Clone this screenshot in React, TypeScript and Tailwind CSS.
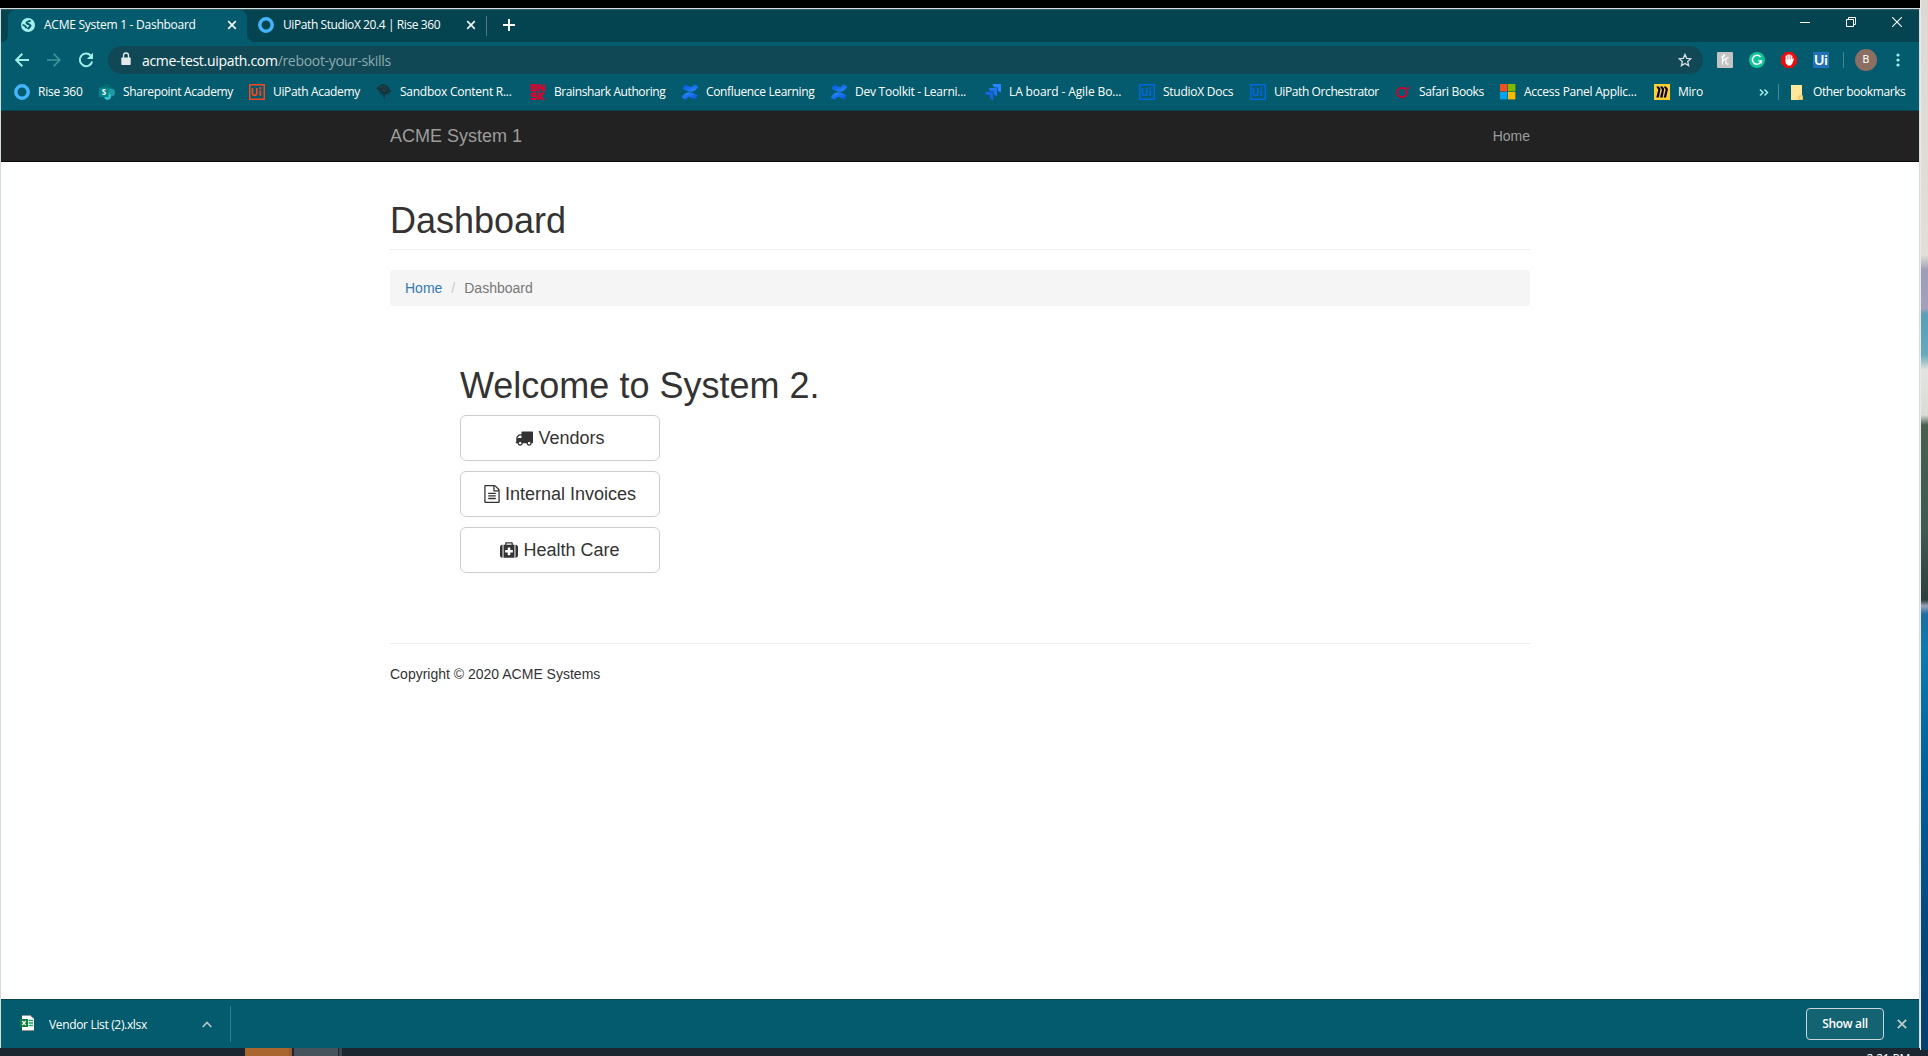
import React from "react";

type IconProps = { className?: string };

const Ring = () => (
  <svg width="16" height="16" viewBox="0 0 16 16" className="shrink-0">
    <circle cx="8" cy="8" r="6.2" fill="none" stroke="#45b5f9" strokeWidth="3.5" />
  </svg>
);

const Globe = () => (
  <svg width="16" height="16" viewBox="0 0 16 16" className="shrink-0">
    <circle cx="8" cy="8" r="7" fill="#a4f0ea" />
    <path d="M10.6 3.4C9.200 4.600 7 4.200 6.500 5.700c-.4 1.500 3.500 1.100 4 2.800.3 1.600-2 1.800-2.700 3.700" fill="none" stroke="#075a6c" strokeWidth="2" />
    <path d="M2.500 7.700l2.300 1 .9 1.700h1.500" fill="none" stroke="#075a6c" strokeWidth="1.600" />
  </svg>
);

const Sharepoint = () => (
  <svg width="16" height="16" viewBox="0 0 16 16" className="shrink-0">
    <circle cx="8" cy="5" r="5" fill="#036c70" />
    <circle cx="12" cy="8.6" r="4" fill="#1a9ba1" />
    <circle cx="8.6" cy="12.6" r="3.3" fill="#37c6d0" />
    <rect x="0" y="3.5" width="9.500" height="9.500" rx="1" fill="#03838a" />
    <text x="4.800" y="11.200" fontSize="8" fontWeight="700" fill="#fff" textAnchor="middle" fontFamily="Open Sans, sans-serif">S</text>
  </svg>
);

const UiBox = ({ color }: { color: string }) => (
  <svg width="16" height="16" viewBox="0 0 16 16" className="shrink-0">
    <rect x="0.75" y="0.75" width="14.5" height="14.5" fill="none" stroke={color} strokeWidth="1.5" />
    <path d="M3.4 4v5.2a2.2 2.2 0 0 0 4.4 0V4M11.3 6.2V12" fill="none" stroke={color} strokeWidth="1.7" />
    <circle cx="11.3" cy="4.2" r="1.1" fill={color} />
  </svg>
);

const Bird = () => (
  <svg width="16" height="16" viewBox="0 0 16 16" className="shrink-0">
    <path d="M0 4.5 4 1.2 8 0l4 2.4L15.6 8l-2.3-.6.5 3-2.2-1.5-.4 2.4L9.4 9.8 8.2 15.5 6.4 9.6 4.6 10.8 4.2 7.6 2.4 8.3 2.6 5.8Z" fill="#15343d" />
    <path d="M3.5 3.5 8 2.5l3.5 3M6 6l4 1" fill="none" stroke="#285561" strokeWidth=".7" />
  </svg>
);

const Brainshark = () => (
  <svg width="16" height="16" viewBox="0 0 16 16" className="shrink-0" fill="none" stroke="#e4002b" strokeWidth="2">
    <path d="M1.8 0v7.4M1.8 1h3.6q1 0 1 1.2t-1 1.3H2M5.4 3.7q1.3 0 1.3 1.4T5.4 6.5H2" />
    <path d="M9.3 7.4V0M9.5.8l4 5.6M14 7.4V0" />
    <path d="M6.8 9.4H3.2q-1.6 0-1.6 1.3T3 12h2.3q1.4 0 1.4 1.4T5.2 15H1" />
    <path d="M9.3 8.2V16M14.2 8.2l-4.4 4 4.6 3.8" />
  </svg>
);

const Confluence = () => (
  <svg width="16" height="16" viewBox="0 0 24 24" className="shrink-0">
    <defs>
      <linearGradient id="confluence-lower" x1="1" y1="1" x2="0.2" y2="0">
        <stop offset="0" stopColor="#0052cc" />
        <stop offset="0.9" stopColor="#2684ff" />
      </linearGradient>
      <linearGradient id="confluence-upper" x1="0" y1="0" x2="0.8" y2="1">
        <stop offset="0" stopColor="#0052cc" />
        <stop offset="0.9" stopColor="#2684ff" />
      </linearGradient>
    </defs>
    <path d="M.87 18.257c-.248.382-.53.875-.763 1.245a.764.764 0 0 0 .255 1.040l4.965 3.054a.764.764 0 0 0 1.058-.26c.199-.332.454-.763.733-1.221 1.967-3.247 3.945-2.853 7.508-1.146l4.957 2.337a.764.764 0 0 0 1.028-.382l2.364-5.346a.764.764 0 0 0-.382-1 599.851 599.851 0 0 1-4.965-2.361C10.911 10.970 5.224 11.185.87 18.257z" fill="url(#confluence-lower)" />
    <path d="M23.131 5.743c.249-.405.531-.875.764-1.250a.764.764 0 0 0-.256-1.034L18.675.404a.764.764 0 0 0-1.058.260c-.195.335-.451.763-.734 1.225-1.966 3.246-3.945 2.850-7.508 1.146L4.437.694a.764.764 0 0 0-1.027.382L1.046 6.422a.764.764 0 0 0 .382 1c1.039.490 3.105 1.467 4.965 2.361 6.698 3.246 12.392 3.029 16.738-4.040z" fill="url(#confluence-upper)" />
  </svg>
);

const Jira = () => (
  <svg width="16" height="16" viewBox="0 0 16 16" className="shrink-0">
    <path d="M7.600 0H16v8.300A3.600 3.600 0 0 1 12.700 5V3.400H11A3.500 3.500 0 0 1 7.600 0z" fill="#2684ff" />
    <path d="M3.800 3.900h8.300v8.300A3.600 3.600 0 0 1 8.800 8.800V7.300H7.200A3.500 3.500 0 0 1 3.800 3.900z" fill="#1f74ee" />
    <path d="M0 7.700h8.300V16A3.600 3.600 0 0 1 5 12.700v-1.600H3.400A3.500 3.500 0 0 1 0 7.700z" fill="#1565e0" />
  </svg>
);

const Safari = () => (
  <svg width="16" height="16" viewBox="0 0 16 16" className="shrink-0">
    <circle cx="7" cy="8.500" r="4.700" fill="none" stroke="#d3002d" strokeWidth="2" />
    <circle cx="13.300" cy="4" r="1.300" fill="#d3002d" />
  </svg>
);

const Microsoft = () => (
  <svg width="16" height="16" viewBox="0 0 16 16" className="shrink-0">
    <path d="M0 0h7.400v7.400H0z" fill="#f25022" />
    <path d="M8 0h7.400v7.400H8z" fill="#7fba00" />
    <path d="M0 8h7.400v7.400H0z" fill="#00a4ef" />
    <path d="M8 8h7.400v7.400H8z" fill="#ffb900" />
  </svg>
);

const Miro = () => (
  <svg width="16" height="16" viewBox="0 0 16 16" className="shrink-0">
    <path d="M0 0h16v16H0z" fill="#ffd02f" />
    <path d="M2.200 2.500h2.600L6.500 4.800 4.900 13.500H2.300L4.300 5.800zM5.900 2.500h2.600l1.700 2.300-1.600 8.700H6L8 5.800zM9.600 2.500h2.400l2 2.500-1.900 8.500H9.700L11.700 5.800z" fill="#050038" />
  </svg>
);

const TabClose = () => (
  <svg width="10" height="10" viewBox="0 0 10 10" className="shrink-0">
    <path d="M1.200 1.200l7.600 7.600M8.800 1.200 1.200 8.800" stroke="#eef5f6" strokeWidth="1.700" />
  </svg>
);

const Truck = ({ className }: IconProps) => (
  <svg viewBox="0 0 1792 1792" fill="currentColor" className={className}>
    <path d="M640 1408q0-52-38-90t-90-38-90 38-38 90 38 90 90 38 90-38 38-90zm-384-512h384v-256h-158q-13 0-22 9l-195 195q-9 9-9 22v30zm1280 512q0-52-38-90t-90-38-90 38-38 90 38 90 90 38 90-38 38-90zm256-1088v1024q0 15-4 26.500t-13.500 18.500-16.500 11.500-23.500 6-22.500 2-25.500 0-22.500-.5q0 106-75 181t-181 75-181-75-75-181h-384q0 106-75 181t-181 75-181-75-75-181h-64q-3 0-22.500.5t-25.500 0-22.500-2-23.500-6-16.500-11.500-13.500-18.500-4-26.500q0-26 19-45t45-19v-320q0-8-.5-35t0-38 2.500-34.500 6.500-37 14-30.500 22.500-30l198-198q19-19 50.500-32t58.500-13h160v-192q0-26 19-45t45-19h1024q26 0 45 19t19 45z" />
  </svg>
);

const FileText = ({ className }: IconProps) => (
  <svg viewBox="128 0 1536 1792" fill="currentColor" className={className}>
    <path d="M1596 380q28 28 48 76t20 88v1152q0 40-28 68t-68 28h-1344q-40 0-68-28t-28-68v-1600q0-40 28-68t68-28h896q40 0 88 20t76 48zm-444-244v376h376q-10-29-22-41l-313-313q-12-12-41-22zm384 1528v-1024h-416q-40 0-68-28t-28-68v-416h-768v1536h1280zm-1024-864q0-14 9-23t23-9h704q14 0 23 9t9 23v64q0 14-9 23t-23 9h-704q-14 0-23-9t-9-23v-64zm736 224q14 0 23 9t9 23v64q0 14-9 23t-23 9h-704q-14 0-23-9t-9-23v-64q0-14 9-23t23-9h704zm0 256q14 0 23 9t9 23v64q0 14-9 23t-23 9h-704q-14 0-23-9t-9-23v-64q0-14 9-23t23-9h704z" />
  </svg>
);

const Medkit = ({ className }: IconProps) => (
  <svg viewBox="0 0 1792 1792" fill="currentColor" className={className}>
    <path d="M1280 1120v-192q0-14-9-23t-23-9h-224v-224q0-14-9-23t-23-9h-192q-14 0-23 9t-9 23v224h-224q-14 0-23 9t-9 23v192q0 14 9 23t23 9h224v224q0 14 9 23t23 9h192q14 0 23-9t9-23v-224h224q14 0 23-9t9-23zm-640-736h512v-128h-512v128zm-384 0v1280h-32q-92 0-158-66t-66-158v-832q0-92 66-158t158-66h32zm1184 0v1280h-1088v-1280h160v-160q0-40 28-68t68-28h576q40 0 68 28t28 68v160h160zm352 224v832q0 92-66 158t-158 66h-32v-1280h32q92 0 158 66t66 158z" />
  </svg>
);

function TabStrip() {
  return (
    <div className="flex h-[32px] bg-[#034450] text-[12px] text-white">
      <div className="flex w-[7px] items-end bg-[#045b6d]">
        <div className="h-full w-full rounded-br-[7px] bg-[#034450]" />
      </div>
      <div className="flex bg-[#034450]">
        <div className="flex w-[239px] items-center rounded-t-[8px] bg-[#045b6d] pb-[2px] pl-[12px] pr-[10px]">
          <Globe />
          <span className="ml-[8px] flex-1 whitespace-nowrap tracking-[-0.26px]">ACME System 1 - Dashboard</span>
          <TabClose />
        </div>
      </div>
      <div className="bg-[#045b6d]">
        <div className="flex h-full w-[240px] items-center rounded-bl-[8px] bg-[#034450] pb-[2px] pl-[11px]">
          <Ring />
          <span className="ml-[9px] w-[183px] whitespace-nowrap tracking-[-0.41px]">UiPath StudioX 20.4 | Rise 360</span>
          <TabClose />
          <div className="ml-[10px] mt-[2px] h-[20px] w-px shrink-0 bg-[#4b7b85]" />
        </div>
      </div>
      <svg width="12" height="12" viewBox="0 0 12 12" className="ml-[16px] mt-[9px] shrink-0">
        <path d="M0 6h12M6 0v12" stroke="#fff" strokeWidth="2" />
      </svg>
      <div className="ml-auto flex pr-[17px] pt-[7px]">
        <svg width="10" height="11" viewBox="0 0 10 11" className="mr-[36px]">
          <path d="M0 5.500h10" stroke="#fff" />
        </svg>
        <svg width="10" height="10" viewBox="0 0 10 10" className="mr-[36px]" fill="none" stroke="#fff">
          <path d="M.5 2.500h7v7h-7zM2.500 2.500v-2h7v7h-2" />
        </svg>
        <svg width="10" height="10" viewBox="0 0 10 10">
          <path d="M0 0l10 10M10 0 0 10" stroke="#fff" strokeWidth="1.100" />
        </svg>
      </div>
    </div>
  );
}

function Toolbar() {
  return (
    <div className="flex h-[36px] items-center bg-[#045b6d] pl-[14px]">
      <svg width="14" height="14" viewBox="0 0 14 14" fill="none" stroke="#a1ede8" strokeWidth="2">
        <path d="M14 7H1.500M7.300.8 1.200 7l6.100 6.200" />
      </svg>
      <svg width="14" height="14" viewBox="0 0 14 14" className="ml-[18px]" fill="none" stroke="#3f97a1" strokeWidth="1.600">
        <path d="M0 7h12.500M6.700.8 12.800 7l-6.100 6.200" />
      </svg>
      <svg width="16" height="16" viewBox="0 0 16 16" className="ml-[17px]">
        <path d="M12.700 3.500A6.300 6.300 0 1 0 14.200 9.500" fill="none" stroke="#a1ede8" strokeWidth="2" />
        <path d="M15 .8v6.200H8.900z" fill="#a1ede8" />
      </svg>
      <div className="ml-[14px] flex h-[28px] w-[1595px] items-center rounded-full bg-[#104955] pl-[13px] pr-[11px]">
        <svg width="10" height="14" viewBox="0 0 10 14" className="mb-[2px]">
          <path d="M1 5.500h8q.7 0 .7.700v6q0 .7-.7.700H1q-.7 0-.7-.7v-6q0-.7.7-.7z" fill="#e4eaeb" />
          <path d="M2.500 6V3.500a2.500 2.500 0 0 1 5 0V6" fill="none" stroke="#e4eaeb" strokeWidth="1.300" />
        </svg>
        <span className="ml-[11px] flex-1 whitespace-nowrap text-[14px] tracking-[-0.31px] text-[#8fa9ae]">
          <span className="text-white">acme-test.uipath.com</span>/reboot-your-skills
        </span>
        <svg width="14" height="14" viewBox="0 0 14 14">
          <path d="M7 1.400 8.700 5.300l4.100.4-3.100 2.800.9 4.100L7 10.500l-3.600 2.100.9-4.100L1.200 5.700l4.100-.4z" fill="none" stroke="#d6dfe1" strokeWidth="1.300" />
        </svg>
      </div>
      <svg width="16" height="16" viewBox="0 0 16 16" className="ml-[14px]">
        <rect width="16" height="16" rx="1" fill="#c3c3c3" />
        <path d="M4 5.200C6 5 7.800 4.300 7.600 3 7.200 1.800 5.600 3.500 5.500 7v5.500M5.600 9.500c1.300-2.600 4-2.700 3.500-.6-.6 2.100-.3 4 2.400 2.900M7.500 6.500l4.300-.8" fill="none" stroke="#fff" strokeWidth="1.200" />
      </svg>
      <svg width="16" height="16" viewBox="0 0 16 16" className="ml-[16px]">
        <circle cx="8" cy="8" r="8" fill="#15c39a" />
        <path d="M11.500 5A4.500 4.500 0 1 0 12.300 9H9.400" fill="none" stroke="#fff" strokeWidth="1.500" />
        <path d="M12.300 8.300v3.200" stroke="#fff" strokeWidth="1.200" />
      </svg>
      <svg width="16" height="16" viewBox="0 0 16 16" className="ml-[16px]">
        <path d="M4.700 0h6.600L16 4.700v6.600L11.300 16H4.700L0 11.300V4.700z" fill="#ea0d0d" />
        <path d="M5.300 4v5M7.100 3v5M8.900 3v5M10.700 4v5" stroke="#fff" strokeWidth="1.400" strokeLinecap="round" />
        <path d="M4.600 7.500h6.800l1-1.200.6.700-1.800 4.700-1.500 1.700H6.900L4.600 11z" fill="#fff" />
      </svg>
      <div className="ml-[16px] flex h-[16px] w-[16px] items-center justify-center bg-[#2170b8] font-['Lato'] text-[14px] font-bold leading-none text-white">Ui</div>
      <div className="ml-[14px] h-[16px] w-px bg-[#3c8a96]" />
      <div className="ml-[11px] flex h-[22px] w-[22px] items-center justify-center rounded-full bg-[#8d6e63] font-['Roboto'] text-[11px] text-white">B</div>
      <svg width="4" height="14" viewBox="0 0 4 14" className="ml-[19px]" fill="#a1ede8">
        <circle cx="2" cy="2" r="1.600" />
        <circle cx="2" cy="7" r="1.600" />
        <circle cx="2" cy="12" r="1.600" />
      </svg>
    </div>
  );
}

const bookmarks = [
  { label: "Rise 360", icon: <Ring />, box: "w-[85px] tracking-[-0.25px]" },
  { label: "Sharepoint Academy", icon: <Sharepoint />, box: "w-[150px] tracking-[-0.32px]" },
  { label: "UiPath Academy", icon: <UiBox color="#f9461c" />, box: "w-[127px] tracking-[-0.34px]" },
  { label: "Sandbox Content R...", icon: <Bird />, box: "w-[154px] tracking-[-0.25px]" },
  { label: "Brainshark Authoring", icon: <Brainshark />, box: "w-[152px] tracking-[-0.4px]" },
  { label: "Confluence Learning", icon: <Confluence />, box: "w-[149px] tracking-[-0.35px]" },
  { label: "Dev Toolkit - Learni...", icon: <Confluence />, box: "w-[154px] tracking-[-0.25px]" },
  { label: "LA board - Agile Bo...", icon: <Jira />, box: "w-[154px] tracking-[-0.12px]" },
  { label: "StudioX Docs", icon: <UiBox color="#0067df" />, box: "w-[111px] tracking-[-0.25px]" },
  { label: "UiPath Orchestrator", icon: <UiBox color="#0067df" />, box: "w-[145px] tracking-[-0.4px]" },
  { label: "Safari Books", icon: <Safari />, box: "w-[105px] tracking-[-0.36px]" },
  { label: "Access Panel Applic...", icon: <Microsoft />, box: "w-[154px] tracking-[-0.25px]" },
  { label: "Miro", icon: <Miro />, box: "w-[105px] tracking-[-0.25px]" },
];

function BookmarkBar() {
  return (
    <div className="flex h-[33px] items-center border-b border-[#0b4350] bg-[#045b6d] pb-[4px] pl-[13px] text-[12px] text-white">
      {bookmarks.map((b) => (
        <div key={b.label} className={`flex shrink-0 items-center gap-[8px] whitespace-nowrap ${b.box}`}>
          {b.icon}
          <span>{b.label}</span>
        </div>
      ))}
      <svg width="10" height="7" viewBox="0 0 10 7" fill="none" stroke="#a1ede8" strokeWidth="1.500">
        <path d="M1 .5l3 3-3 3M5.500.5l3 3-3 3" />
      </svg>
      <div className="ml-[9px] h-[16px] w-px bg-[#3c8a96]" />
      <svg width="12" height="15" viewBox="0 0 12 15" className="ml-[12px]">
        <path d="M0 0h11v10.500h1V15H0z" fill="#ffe69a" />
        <path d="M8 14.500v-3.500h3.500v3.500z" fill="#ffe07e" stroke="#d9b24c" strokeWidth=".7" />
      </svg>
      <span className="ml-[10px] whitespace-nowrap tracking-[-0.41px]">Other bookmarks</span>
    </div>
  );
}

const links = [
  { label: "Vendors", icon: <Truck className="h-[18px] w-[18px]" /> },
  { label: "Internal Invoices", icon: <FileText className="h-[18px] w-[16px]" /> },
  { label: "Health Care", icon: <Medkit className="h-[18px] w-[18px]" /> },
];

function Page() {
  return (
    <div className="flex-1 bg-white font-['Liberation_Sans',Arial,sans-serif] text-[14px] leading-[20px] text-[#333]">
      <nav className="h-[51px] border-b border-[#080808] bg-[#222]">
        <div className="ml-[389px] flex h-[50px] w-[1140px] items-center justify-between text-[#9d9d9d]">
          <span className="text-[18px]">ACME System 1</span>
          <span>Home</span>
        </div>
      </nav>
      <main className="ml-[389px] w-[1140px]">
        <h1 className="mt-[39px] h-[49px] border-b border-[#eee] text-[36px] leading-[40px]">Dashboard</h1>
        <div className="mt-[20px] flex h-[36px] items-center rounded-[4px] bg-[#f5f5f5] px-[15px]">
          <span className="text-[#337ab7]">Home</span>
          <span className="px-[9px] text-[#ccc]">/</span>
          <span className="text-[#777]">Dashboard</span>
        </div>
        <section className="ml-[70px] mt-[60px]">
          <h1 className="h-[49px] text-[36px] leading-[40px]">Welcome to System 2.</h1>
          <div className="flex flex-col gap-[10px]">
            {links.map((l) => (
              <button
                key={l.label}
                className="flex h-[46px] w-[200px] items-center justify-center gap-[5px] rounded-[6px] border border-[#ccc] bg-white text-[18px]"
              >
                {l.icon}
                <span>{l.label}</span>
              </button>
            ))}
          </div>
        </section>
        <footer className="mt-[70px] border-t border-[#eee] pt-[20px]">Copyright © 2020 ACME Systems</footer>
      </main>
    </div>
  );
}

function DownloadShelf() {
  return (
    <div className="flex h-[49px] items-center border-t border-[#0b4350] bg-[#045b6d] text-[12px] text-white">
      <svg width="14" height="16" viewBox="0 0 14 16" className="mb-[3px] ml-[19px]">
        <path d="M2 0h8l4 3.500V16H2z" fill="#fff" />
        <path d="M2 .5h8l3.500 3M2 15.500h12" fill="none" stroke="#777" strokeWidth=".8" />
        <path d="M8.500 5.500H13M8.500 8H13M8.500 10.500H13" stroke="#21a366" strokeWidth="1.500" />
        <rect x="0" y="4" width="8" height="8" fill="#107c41" />
        <path d="M2.200 6l3.600 4.200M5.800 6l-3.600 4.200" stroke="#fff" strokeWidth="1.200" />
      </svg>
      <span className="ml-[15px] w-[153px] whitespace-nowrap pt-[2px] tracking-[-0.34px]">Vendor List (2).xlsx</span>
      <svg width="10" height="7" viewBox="0 0 10 7" className="mt-[1px]">
        <path d="M.7 6 5 1.500 9.300 6" fill="none" stroke="#b7c6c9" strokeWidth="1.700" />
      </svg>
      <div className="ml-[18px] h-[36px] w-px bg-[#2f7f8b]" />
      <button className="ml-auto h-[32px] w-[78px] rounded-[4px] border border-[#c6d8db] bg-[#146373] text-[12px] font-semibold tracking-[-0.3px]">Show all</button>
      <svg width="10" height="10" viewBox="0 0 10 10" className="ml-[13px] mr-[12px]">
        <path d="M.8.8l8.400 8.400M9.200.8.800 9.200" stroke="#c0cacc" strokeWidth="1.800" />
      </svg>
    </div>
  );
}

export default function App() {
  return (
    <div className="flex h-[1056px] w-[1928px] overflow-hidden bg-[#1b2630] font-['Open_Sans','Noto_Sans',sans-serif]">
      <div className="flex w-[1920px] flex-col">
        <div className="h-[8px] bg-black" />
        <div className="flex h-[1040px] flex-col border-x border-t border-[#d5dcdc]">
          <div className="h-px bg-[#33616a]" />
          <TabStrip />
          <Toolbar />
          <BookmarkBar />
          <Page />
          <DownloadShelf />
        </div>
        <div className="flex h-[8px] overflow-hidden">
          <div className="ml-[245px] w-[44px] bg-[#a9662e]" />
          <div className="w-[4px] border-r border-[#1b2630] bg-[#955c2f]" />
          <div className="ml-px w-[44px] bg-[#47535c]" />
          <div className="ml-px w-[3px] bg-[#3a454e]" />
          <span className="ml-auto mr-[10px] mt-[4px] whitespace-nowrap text-[12px] leading-[14px] tracking-[-0.2px] text-white">2:21 PM</span>
        </div>
      </div>
      <div className="flex w-[8px] flex-col">
        <div className="h-[1050px] border-l border-[#e6ecec] bg-linear-[180deg,#ddd9d2_0px,#e2dfd8_255px,#9d9db5_270px,#a3a2ba_308px,#589fb5_315px,#6aa9bb_355px,#e3e4df_370px,#d9dcd5_415px,#47604f_425px,#3f5b52_530px,#2d3f3c_600px,#9aa3bd_606px,#1f6da0_614px,#1279ab_650px,#04629a_760px,#07467a_950px,#093e6d_1050px]" />
        <div className="h-[6px] bg-[#1b2630]" />
      </div>
    </div>
  );
}
